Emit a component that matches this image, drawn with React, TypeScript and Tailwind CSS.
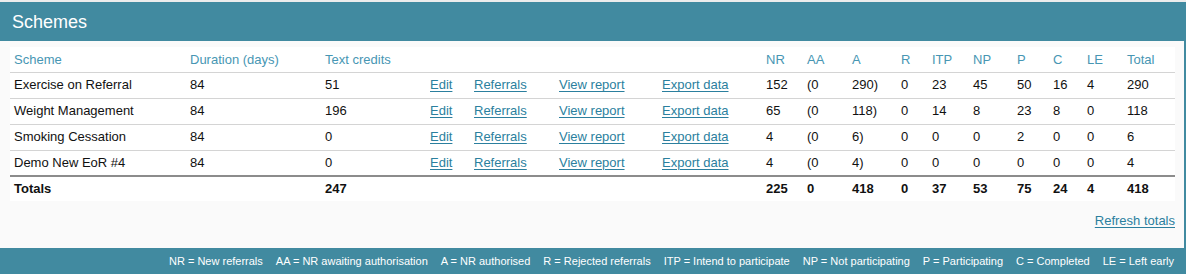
const schemes = [
  { name: "Exercise on Referral", duration: 84, credits: 51, nr: 152, aa: "(0", a: "290)", r: 0, itp: 23, np: 45, p: 50, c: 16, le: 4, total: 290 },
  { name: "Weight Management", duration: 84, credits: 196, nr: 65, aa: "(0", a: "118)", r: 0, itp: 14, np: 8, p: 23, c: 8, le: 0, total: 118 },
  { name: "Smoking Cessation", duration: 84, credits: 0, nr: 4, aa: "(0", a: "6)", r: 0, itp: 0, np: 0, p: 2, c: 0, le: 0, total: 6 },
  { name: "Demo New EoR #4", duration: 84, credits: 0, nr: 4, aa: "(0", a: "4)", r: 0, itp: 0, np: 0, p: 0, c: 0, le: 0, total: 4 },
];

const widths = [176, 135, 105, 44, 85, 103, 104, 41, 45, 49, 31, 41, 44, 36, 34, 40, 52];

const headers = ["Scheme", "Duration (days)", "Text credits", "", "", "", "", "NR", "AA", "A", "R", "ITP", "NP", "P", "C", "LE", "Total"];

const legend = [
  "NR = New referrals",
  "AA = NR awaiting authorisation",
  "A = NR authorised",
  "R = Rejected referrals",
  "ITP = Intend to participate",
  "NP = Not participating",
  "P = Participating",
  "C = Completed",
  "LE = Left early",
];

const link = "text-[#2b7f9e] underline underline-offset-2";

export default function App() {
  return (
    <div className="w-[1186px] h-[274px] bg-[#ececec] pt-[2px] font-['Liberation_Sans',Arial,sans-serif]">
      <div className="h-[39px] bg-[#418aa0] pl-[12px] flex items-center">
        <h2 className="text-[18px] text-white leading-none">Schemes</h2>
      </div>

      <div className="h-[207px] bg-[#fafafa] border-r-2 border-[#418aa0] pl-[10px] pr-[9px] pt-[6px]">
        <table className="table-fixed w-[1165px] bg-white text-[13px] text-[#111] border-collapse">
          <colgroup>
            {widths.map((w, i) => (
              <col key={i} style={{ width: w }} />
            ))}
          </colgroup>
          <thead>
            <tr className="h-[25px] border-b border-[#d4d4d4]">
              {headers.map((h, i) => (
                <th key={i} className="px-[4px] text-left font-normal text-[#4796b3] whitespace-nowrap">
                  {h}
                </th>
              ))}
            </tr>
          </thead>
          <tbody>
            {schemes.map((s, i) => (
              <tr key={s.name} className={`h-[26px] ${i === schemes.length - 1 ? "" : "border-b border-[#d4d4d4]"}`}>
                <td className="px-[4px] whitespace-nowrap">{s.name}</td>
                <td className="px-[4px]">{s.duration}</td>
                <td className="px-[4px]">{s.credits}</td>
                <td className="px-[4px]"><a className={link}>Edit</a></td>
                <td className="px-[4px]"><a className={link}>Referrals</a></td>
                <td className="px-[4px] whitespace-nowrap"><a className={link}>View report</a></td>
                <td className="px-[4px] whitespace-nowrap"><a className={link}>Export data</a></td>
                <td className="px-[4px]">{s.nr}</td>
                <td className="px-[4px]">{s.aa}</td>
                <td className="px-[4px]">{s.a}</td>
                <td className="px-[4px]">{s.r}</td>
                <td className="px-[4px]">{s.itp}</td>
                <td className="px-[4px]">{s.np}</td>
                <td className="px-[4px]">{s.p}</td>
                <td className="px-[4px]">{s.c}</td>
                <td className="px-[4px]">{s.le}</td>
                <td className="px-[4px]">{s.total}</td>
              </tr>
            ))}
            <tr className="h-[25px] border-t-2 border-[#8c8c8c] font-bold">
              <td className="px-[4px]">Totals</td>
              <td className="px-[4px]"></td>
              <td className="px-[4px]">247</td>
              <td colSpan={4}></td>
              <td className="px-[4px]">225</td>
              <td className="px-[4px]">0</td>
              <td className="px-[4px]">418</td>
              <td className="px-[4px]">0</td>
              <td className="px-[4px]">37</td>
              <td className="px-[4px]">53</td>
              <td className="px-[4px]">75</td>
              <td className="px-[4px]">24</td>
              <td className="px-[4px]">4</td>
              <td className="px-[4px]">418</td>
            </tr>
          </tbody>
        </table>
        <div className="w-[1165px] flex justify-end mt-[10px] text-[13px]">
          <a className={link}>Refresh totals</a>
        </div>
      </div>

      <div className="h-[26px] bg-[#418aa0] flex items-center justify-end gap-[13px] pr-[12px] text-[11px] text-white">
        {legend.map((l) => (
          <span key={l} className="whitespace-nowrap">{l}</span>
        ))}
      </div>
    </div>
  );
}
